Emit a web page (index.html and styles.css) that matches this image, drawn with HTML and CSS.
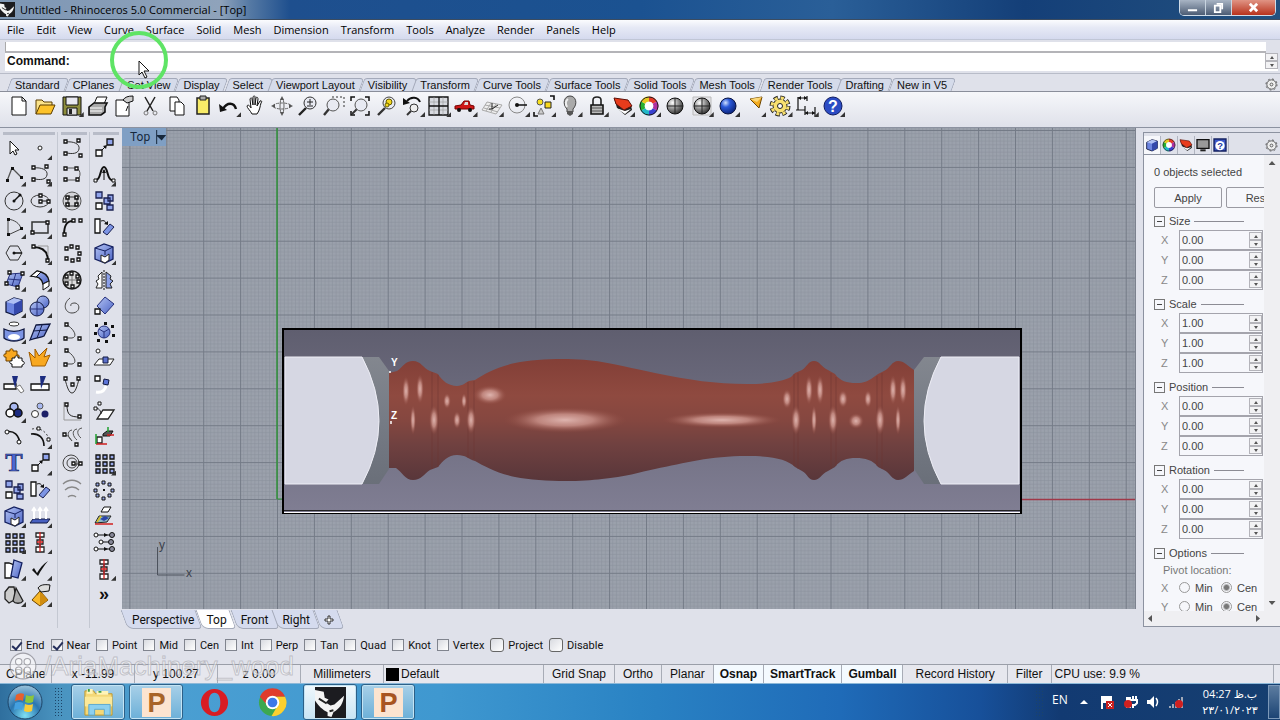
FILE: index.html
```html
<!DOCTYPE html>
<html lang="en">
<head>
    <meta charset="UTF-8">
    <meta name="viewport" content="width=device-width, initial-scale=1.0">
    <title>Untitled - Rhinoceros 5.0 Commercial - [Top]</title>
    <link rel="stylesheet" href="styles.css">
</head>
<body>

<!-- Icon set -->
<svg class="defs" aria-hidden="true">
    <defs>
        <linearGradient id="gBlue" x1="0" y1="0" x2="1" y2="1"><stop offset="0" stop-color="#b4c4f4"/><stop offset="1" stop-color="#4a62c4"/></linearGradient>
        <radialGradient id="gGrey" cx=".35" cy=".3" r=".8"><stop offset="0" stop-color="#fff"/><stop offset=".5" stop-color="#8a8a8a"/><stop offset="1" stop-color="#222"/></radialGradient>
        <radialGradient id="gBall" cx=".35" cy=".3" r=".8"><stop offset="0" stop-color="#cfe0ff"/><stop offset=".35" stop-color="#2a58d8"/><stop offset="1" stop-color="#061c6c"/></radialGradient>
        <radialGradient id="gOrb" cx=".5" cy=".9" r=".9"><stop offset="0" stop-color="#7fe0f4"/><stop offset=".5" stop-color="#2a76b0"/><stop offset="1" stop-color="#9cc4dc"/></radialGradient>
    </defs>

    <!-- standard toolbar -->
    <symbol id="new" viewBox="0 0 24 24"><path d="M5 3h10l4 4v14H5z" fill="#fff" stroke="#111"/><path d="M15 3v4h4" fill="none" stroke="#111"/></symbol>
    <symbol id="open" viewBox="0 0 24 24"><path d="M3 20V6h6l2 2h8v4" fill="#fbe38a" stroke="#5a3c00"/><path d="M3 20l4-9h15l-4 9z" fill="#fcc22a" stroke="#5a3c00"/></symbol>
    <symbol id="save" viewBox="0 0 24 24"><path d="M3 3h18v18H3z" fill="#8c8c3c" stroke="#111"/><path d="M6 3h12v8H6z" fill="#e8e8f0" stroke="#111"/><path d="M7 14h10v7H7z" fill="#ddd" stroke="#111"/><path d="M9 15h3v5H9z" fill="#222"/></symbol>
    <symbol id="print" viewBox="0 0 24 24"><path d="M8 10l3-7h10l-3 7z" fill="#fff" stroke="#111"/><path d="M3 13l5-4h13l-2 4v5l-4 3H3z" fill="#aaa" stroke="#111" stroke-width="1.600"/><path d="M4 14h12M4 17h12" stroke="#fff"/></symbol>
    <symbol id="props" viewBox="0 0 24 24"><path d="M4 6h13v16H4z" fill="#fff" stroke="#111"/><path d="M11 6c2-3 5-4 10-4v5l-6 2z" fill="#ccc" stroke="#111"/><path d="M16 12l-2 5" stroke="#111"/></symbol>
    <symbol id="cut" viewBox="0 0 24 24"><path d="M7 3l8 14M17 3L9 17" fill="none" stroke="#222" stroke-width="1.500"/><circle cx="8" cy="19" r="2" fill="none" stroke="#777"/><circle cx="17" cy="19" r="2" fill="none" stroke="#777"/></symbol>
    <symbol id="copy" viewBox="0 0 24 24"><path d="M5 3h7l2 3v11H5z" fill="#fff" stroke="#111"/><path d="M10 8h6l3 3v10h-9z" fill="#fff" stroke="#111"/></symbol>
    <symbol id="paste" viewBox="0 0 24 24"><path d="M6 4h12v16H6z" fill="#f8ec68" stroke="#222" stroke-width="1.500"/><path d="M9 2h6v4H9z" fill="#aaa" stroke="#222"/></symbol>
    <symbol id="undo" viewBox="0 0 24 24"><path d="M6 15C10 8 17 8 19 15" fill="none" stroke="#111" stroke-width="2.400"/><path d="M2 10l1 8 7-2z" fill="#111"/></symbol>
    <symbol id="pan" viewBox="0 0 24 24"><path d="M9 20C7 16 4 14 4 12c1-2 3 0 4 2L7 5c1-2 2-1 2 0l1 6V3c1-2 2-1 2 0v8l1-7c1-2 2 0 2 1l-1 7 3-5c2-1 2 1 1 2-1 3-1 7-4 11z" fill="#fff" stroke="#111"/></symbol>
    <symbol id="rotate" viewBox="0 0 24 24"><ellipse cx="12" cy="12" rx="9" ry="3" fill="none" stroke="#666" stroke-dasharray="3 1"/><ellipse cx="12" cy="12" rx="2" ry="8" fill="none" stroke="#666"/><path d="M12 2l-2 4h4zM12 22l-2-4h4zM1 12l4-2v4zM23 12l-4-2v4z" fill="#555"/></symbol>
    <symbol id="zoom" viewBox="0 0 24 24"><path d="M10 14l-7 7" stroke="#222" stroke-width="2.400"/><circle cx="14" cy="9" r="6" fill="#e8eaf2" stroke="#333"/><path d="M11 8h6M14 5v6M11 12h6" stroke="#222"/></symbol>
    <symbol id="zoomwin" viewBox="0 0 24 24"><path d="M10 3h12v12" fill="none" stroke="#333" stroke-dasharray="2 2"/><path d="M7 15l-5 6" stroke="#333" stroke-width="2.400"/><circle cx="11" cy="11" r="6" fill="#e8eaf2" stroke="#555"/></symbol>
    <symbol id="zoomext" viewBox="0 0 24 24"><path d="M3 7V3h4M17 3h4v4M21 17v4h-4M7 21H3v-4" fill="none" stroke="#111" stroke-width="1.500"/><path d="M9 15l-5 5" stroke="#333" stroke-width="2"/><circle cx="13" cy="11" r="6" fill="#e8eaf2" stroke="#555"/></symbol>
    <symbol id="zoomsel" viewBox="0 0 24 24"><path d="M10 14l-7 7" stroke="#333" stroke-width="2.400"/><circle cx="14" cy="9" r="6" fill="#e8eaf2" stroke="#444"/><circle cx="14" cy="8" r="3" fill="#f4d81c" stroke="#665c00"/><circle cx="12" cy="11" r="2" fill="#f4d81c" stroke="#665c00"/></symbol>
    <symbol id="undoview" viewBox="0 0 24 24"><path d="M6 7c4-5 11-4 13 1" fill="none" stroke="#111" stroke-width="2"/><path d="M2 4v7l7-2z" fill="#111"/><path d="M10 17l-4 4" stroke="#333" stroke-width="2"/><circle cx="13" cy="14" r="4" fill="#eee" stroke="#333"/></symbol>
    <symbol id="views" viewBox="0 0 24 24"><path d="M2 3h19v18H2z" fill="#d8dae0" stroke="#111" stroke-width="1.300"/><path d="M2 8h19M7 3v18M16 3v18M2 16h19" stroke="#999" stroke-width=".6"/><path d="M12 3v18M2 12h19" stroke="#111" stroke-width="1.300"/></symbol>
    <symbol id="car" viewBox="0 0 24 24"><path d="M2 12l6-1 3-4h5l1 4 4 1v3H2z" fill="#d01818" stroke="#700"/><path d="M11 11l1-3h3v3z" fill="#ddd"/><circle cx="6" cy="16" r="2" fill="#111"/><circle cx="17" cy="16" r="2" fill="#111"/></symbol>
    <symbol id="cplane" viewBox="0 0 24 24"><path d="M7 8l15 3-6 9-14-4zM5 11l15 3M4 14l14 4M11 9l-5 8M16 10l-5 8" fill="#eee" stroke="#aaa"/><path d="M12 15V9M12 15l6-4M12 15h-3" stroke="#222"/></symbol>
    <symbol id="radius" viewBox="0 0 24 24"><circle cx="11" cy="11" r="8" fill="none" stroke="#888"/><path d="M11 11h10" stroke="#111" stroke-width="1.500"/><circle cx="11" cy="11" r="2" fill="#111"/></symbol>
    <symbol id="selobj" viewBox="0 0 24 24"><path d="M18 2h4v4M2 18v4h4" fill="none" stroke="#111" stroke-width="1.600"/><circle cx="8" cy="8" r="3" fill="#f8e020" stroke="#555"/><path d="M13 8h6v6h-6z" fill="#f8d820" stroke="#222"/><path d="M9 14l3 6H6z" fill="#ccc" stroke="#777"/></symbol>
    <symbol id="bulb" viewBox="0 0 24 24"><path d="M9 15c-5-5-3-13 3-13s8 8 3 13v3H9z" fill="#aaa" stroke="#444"/><path d="M10 5c-3 2-2 6-1 8" stroke="#eee" stroke-width="2" fill="none"/><path d="M9 17h6v3l-3 2-3-2z" fill="#555"/></symbol>
    <symbol id="lock" viewBox="0 0 24 24"><path d="M8 11V6c0-4 8-4 8 0v5" fill="none" stroke="#222" stroke-width="1.600"/><path d="M6 11h12v9H6z" fill="#bbb" stroke="#111" stroke-width="1.600"/><path d="M7 14h10M7 17h10" stroke="#555"/></symbol>
    <symbol id="layers" viewBox="0 0 24 24"><path d="M3 4l3 10 8 7 7-5-1-5-7 5-6-5z" fill="#222"/><path d="M5 14l9 6 6-5-6 2z" fill="#fff"/><path d="M3 4l14 2 4 6-8 4-8-6z" fill="#e83c1c" stroke="#5c1008"/></symbol>
    <symbol id="wheel" viewBox="0 0 24 24"><g fill="none" stroke-width="5"><path d="M12 5a7 7 0 0 1 6 3.500" stroke="#e83a28"/><path d="M18 8.500a7 7 0 0 1 0 7" stroke="#b030a0"/><path d="M18 15.500a7 7 0 0 1-6 3.500" stroke="#3840d0"/><path d="M12 19a7 7 0 0 1-6-3.500" stroke="#20b8c8"/><path d="M6 15.500a7 7 0 0 1 0-7" stroke="#28b030"/><path d="M6 8.500A7 7 0 0 1 12 5" stroke="#e8c820"/></g><circle cx="12" cy="12" r="9" fill="none" stroke="#222"/><circle cx="12" cy="12" r="4" fill="#fff"/></symbol>
    <symbol id="sphere" viewBox="0 0 24 24"><circle cx="12" cy="12" r="8" fill="url(#gGrey)" stroke="#111"/><path d="M4 12h16M12 4v16" stroke="#222"/></symbol>
    <symbol id="sphere2" viewBox="0 0 24 24"><path d="M3 3h18v18H3z" fill="#e4e4e8" stroke="#bbb"/><circle cx="12" cy="12" r="8" fill="url(#gGrey)" stroke="#111"/><path d="M4 12h16M12 4v16" stroke="#222"/></symbol>
    <symbol id="ball" viewBox="0 0 24 24"><circle cx="12" cy="12" r="8" fill="url(#gBall)" stroke="#0a1440"/></symbol>
    <symbol id="cone" viewBox="0 0 24 24"><path d="M8 5l12-2-3 11z" fill="#f4ac20" stroke="#6c4400"/><path d="M8 5l12-2-5 5z" fill="#fcd878"/></symbol>
    <symbol id="gear" viewBox="0 0 24 24"><circle cx="12" cy="12" r="8" fill="none" stroke="#222" stroke-width="5" stroke-dasharray="4 2.300"/><circle cx="12" cy="12" r="7" fill="#f8e070" stroke="#222"/><circle cx="12" cy="12" r="8" fill="none" stroke="#f8e070" stroke-width="3" stroke-dasharray="3 3.300" stroke-dashoffset="-.5"/><circle cx="12" cy="12" r="2.500" fill="#fff" stroke="#222"/></symbol>
    <symbol id="dims" viewBox="0 0 24 24"><path d="M3 3v13M3 4h9M12 2v5M1 16h9v-4M10 15v6M20 13v9M10 19h10" fill="none" stroke="#111" stroke-width="1.200"/><path d="M3 4l3-2v4zM12 4L9 2v4zM10 19l3-2v4zM20 19l-3-2v4z" fill="#111"/></symbol>
    <symbol id="cog" viewBox="0 0 14 14"><circle cx="7" cy="7" r="5" fill="#eee" stroke="#555"/><circle cx="7" cy="7" r="6" fill="none" stroke="#555" stroke-dasharray="2 2.700"/><circle cx="7" cy="7" r="1.500" fill="none" stroke="#555"/></symbol>

    <!-- drawing tools -->
    <symbol id="pointer" viewBox="0 0 24 24"><path d="M8 5v13l3-3 2 4 2-1-2-4h4z" fill="#fff" stroke="#111"/></symbol>
    <symbol id="point" viewBox="0 0 24 24"><circle cx="12" cy="12" r="2" fill="#fff" stroke="#222"/></symbol>
    <symbol id="curve" viewBox="0 0 24 24"><path d="M5 6c9-1 15 2 14 7s-7 5-12 4" fill="none" stroke="#333"/><path d="M4 4h3v3H4zM17 3h3v3h-3zM4 16h3v3H4zM19 18h3v3h-3z" fill="#fff" stroke="#111" stroke-width="1.300"/></symbol>
    <symbol id="curve2" viewBox="0 0 24 24"><path d="M6 6h11c4 3 4 9 0 12H6" fill="none" stroke="#555"/><path d="M4 5h3v3H4zM15 5h3v3h-3zM4 16h3v3H4zM16 16h3v3h-3z" fill="#fff" stroke="#111" stroke-width="1.300"/></symbol>
    <symbol id="scale" viewBox="0 0 24 24"><path d="M15 3h6v6h-6z" fill="#90a4ec" stroke="#111" stroke-width="1.300"/><path d="M4 14h6v6H4z" fill="#fff" stroke="#111" stroke-width="1.300"/><path d="M10 14l4-4" stroke="#111"/><path d="M15 9l-1 4-3-3z" fill="#111"/></symbol>
    <symbol id="polyline" viewBox="0 0 24 24"><path d="M5 19l5-13 9 9" fill="none" stroke="#555" stroke-width="1.300"/><path d="M4 17h3v3H4zM9 5h3v3H9zM18 14h3v3h-3z" fill="#111"/></symbol>
    <symbol id="bell" viewBox="0 0 24 24"><path d="M4 18c5 0 4-13 8-13s3 13 8 13" fill="none" stroke="#111" stroke-width="2"/><path d="M12 18V8" stroke="#111"/><path d="M12 7l-2 4h4z" fill="#111"/><path d="M2 17h3v3H2zM20 17h3v3h-3z" fill="#fff" stroke="#111"/></symbol>
    <symbol id="circle" viewBox="0 0 24 24"><circle cx="12" cy="12" r="9" fill="none" stroke="#333"/><path d="M12 12l6-6" stroke="#111" stroke-width="1.500"/><circle cx="12" cy="12" r="1.500" fill="#111"/><circle cx="18" cy="6" r="1.500" fill="#111"/></symbol>
    <symbol id="ellipse" viewBox="0 0 24 24"><ellipse cx="12" cy="12" rx="9" ry="6" fill="none" stroke="#333"/><path d="M12 12h9" stroke="#111"/><path d="M11 5h3v3h-3zM11 11h3v3h-3zM19 11h3v3h-3z" fill="#fff" stroke="#111" stroke-width="1.300"/></symbol>
    <symbol id="ringed" viewBox="0 0 24 24"><circle cx="12" cy="12" r="9" fill="#d4d4d8" stroke="#555"/><path d="M8 8h9v9H8z" fill="none" stroke="#333"/><path d="M6 7h3v3H6zM15 7h3v3h-3zM6 14h3v3H6zM15 14h3v3h-3z" fill="#fff" stroke="#111" stroke-width="1.500"/></symbol>
    <symbol id="arr" viewBox="0 0 24 24"><path d="M4 14h6v6H4z" fill="#fff" stroke="#111" stroke-width="1.300"/><path d="M4 3h6v6H4zM16 6h5v6h-5zM12 9h6v6h-6zM15 16h6v5h-6z" fill="#90a4ec" stroke="#1a2050" stroke-width="1.300"/></symbol>
    <symbol id="arc" viewBox="0 0 24 24"><path d="M6 4v16l13-6C18 8 12 5 6 4z" fill="none" stroke="#444"/><path d="M5 3h3v3H5zM5 18h3v3H5zM18 12h3v3h-3z" fill="#111"/></symbol>
    <symbol id="rect" viewBox="0 0 24 24"><path d="M4 7h16v11H4z" fill="none" stroke="#333" stroke-width="1.500"/><path d="M3 16h3v3H3zM18 6h3v3h-3z" fill="#fff" stroke="#111" stroke-width="1.300"/></symbol>
    <symbol id="arc2" viewBox="0 0 24 24"><path d="M4 20C4 11 6 6 13 6" fill="none" stroke="#111" stroke-width="2"/><path d="M3 4h3v3H3zM12 4h3v3h-3zM19 4h3v3h-3zM3 18h3v3H3z" fill="#fff" stroke="#111" stroke-width="1.300"/></symbol>
    <symbol id="rot" viewBox="0 0 24 24"><path d="M3 4h5v14H3z" fill="#fff" stroke="#111" stroke-width="1.300"/><path d="M11 17l7-8 4 3-7 8z" fill="#7c94e4" stroke="#1a2050"/><path d="M9 6c3-1 4 0 5 2" fill="none" stroke="#111"/><path d="M12 9l4 1V6z" fill="#111"/></symbol>
    <symbol id="hex" viewBox="0 0 24 24"><path d="M8 5h8l4 7-4 7H8l-4-7z" fill="none" stroke="#333"/><path d="M12 12h8" stroke="#111" stroke-width="1.500"/><circle cx="12" cy="12" r="1.500" fill="#111"/></symbol>
    <symbol id="fillet" viewBox="0 0 24 24"><path d="M5 6c9 0 15 4 15 14" fill="none" stroke="#111" stroke-width="2"/><path d="M10 5h10v9" fill="none" stroke="#999"/><path d="M4 4h3v3H4zM18 18h3v3h-3z" fill="#fff" stroke="#111" stroke-width="1.300"/></symbol>
    <symbol id="cring" viewBox="0 0 24 24"><path d="M5 6h3v3H5zM10 4h3v3h-3zM16 5h3v3h-3zM18 11h3v3h-3zM17 17h3v3h-3zM11 18h3v3h-3zM5 16h3v3H5z" fill="#fff" stroke="#111" stroke-width="1.300"/></symbol>
    <symbol id="cage" viewBox="0 0 24 24"><path d="M3 7l9-4 9 3v12l-8 4-10-4z" fill="url(#gBlue)" stroke="#142060" stroke-width="1.300"/><path d="M3 7l10 3 8-4M13 10v4" fill="none" stroke="#142060"/><path d="M9 14l4 2 4-3v6l-4 3-4-2z" fill="#fff" stroke="#222"/></symbol>
    <symbol id="srf4" viewBox="0 0 24 24"><path d="M8 6l13-1-5 14-12-3z" fill="url(#gBlue)" stroke="#26307c"/><path d="M14 5l-4 13M6 11l12 1" stroke="#26307c"/><path d="M6 3h3v3H6zM19 4h3v3h-3zM3 14h3v3H3zM14 18h3v3h-3z" fill="#fff" stroke="#111" stroke-width="1.300"/></symbol>
    <symbol id="sweep" viewBox="0 0 24 24"><path d="M3 8l6-5c7 1 11 4 12 10l-6 3c-1-5-5-8-12-8z" fill="url(#gBlue)" stroke="#111" stroke-width="1.300"/><path d="M15 16l6-3v5l-6 4zM3 8l6-5 4 1-5 5z" fill="#fff" stroke="#111"/></symbol>
    <symbol id="globe" viewBox="0 0 24 24"><circle cx="12" cy="12" r="9" fill="#ddd" stroke="#222" stroke-width="1.500"/><path d="M3 12h18M12 3v18" stroke="#777"/><path d="M5 7h3v3H5zM10 4h3v3h-3zM16 7h3v3h-3zM17 12h3v3h-3zM11 17h3v3h-3zM5 14h3v3H5z" fill="#fff" stroke="#111" stroke-width="1.300"/></symbol>
    <symbol id="mirror" viewBox="0 0 24 24"><path d="M12 2v20" stroke="#111" stroke-dasharray="2 1"/><path d="M10 4v16H4l2-4-2-3 3-2-1-3z" fill="#fff" stroke="#222"/><path d="M14 4v16h6l-2-4 3-3-3-2 1-3z" fill="#8ca0e8" stroke="#222"/></symbol>
    <symbol id="box" viewBox="0 0 24 24"><path d="M4 8l8-4 8 2v11l-8 4-8-3z" fill="#6c84e0" stroke="#101840" stroke-width="1.300"/><path d="M4 8l8-4 8 2-8 4z" fill="#b0c0f4"/><path d="M12 10l8-4v11l-8 4z" fill="#3448ac"/></symbol>
    <symbol id="balls" viewBox="0 0 24 24"><circle cx="15" cy="8" r="6" fill="url(#gBlue)" stroke="#101840"/><circle cx="9" cy="15" r="7" fill="url(#gBlue)" stroke="#101840"/><path d="M2 15h14M9 8v14" stroke="#26307c"/></symbol>
    <symbol id="spiral" viewBox="0 0 24 24"><path d="M10 4c-8 6-5 15 2 15 8 0 9-9 3-10-3 0-5 1-4 3" fill="none" stroke="#444"/></symbol>
    <symbol id="diamond" viewBox="0 0 24 24"><path d="M13 3l9 7-9 10-8-8z" fill="url(#gBlue)" stroke="#26307c"/><path d="M3 15h5v5H3z" fill="#fff" stroke="#111" stroke-width="1.300"/></symbol>
    <symbol id="extrude" viewBox="0 0 24 24"><ellipse cx="12" cy="4" rx="5" ry="2" fill="#fff" stroke="#333"/><path d="M2 9c6 3 14 3 20 0v9c-5 4-15 4-20 0z" fill="#7c94e4" stroke="#101840" stroke-width="1.300"/><ellipse cx="12" cy="17" rx="6" ry="3" fill="#fff"/></symbol>
    <symbol id="patch" viewBox="0 0 24 24"><path d="M8 5l14-1-6 12c-4 2-6 1-14 4z" fill="url(#gBlue)" stroke="#101840" stroke-width="1.300"/><path d="M5 11l14-1M14 5L9 18" stroke="#101840"/></symbol>
    <symbol id="hook" viewBox="0 0 24 24"><path d="M7 5c7 4 11 12 5 13H6" fill="none" stroke="#444"/><path d="M5 3h3v3H5zM4 17h3v3H4zM18 17h3v3h-3z" fill="#fff" stroke="#111" stroke-width="1.300"/></symbol>
    <symbol id="burst" viewBox="0 0 24 24"><circle cx="12" cy="12" r="6" fill="url(#gBlue)" stroke="#26307c"/><path d="M7 9l5 3 5-3M12 12v6" stroke="#26307c" fill="none"/><path d="M3 4h3v3H3zM12 2h3v3h-3zM19 5h3v3h-3zM2 12h3v3H2zM20 14h3v3h-3zM5 19h3v3H5zM13 20h3v3h-3z" fill="#111"/></symbol>
    <symbol id="puzzle" viewBox="0 0 24 24"><path d="M4 5h4c-1-3 4-3 3 0h4v4c3-1 3 4 0 3v3H4v-4c-3 1-3-4 0-3z" fill="#f8a820" stroke="#6c4000"/><path d="M10 12h3c-1-3 4-3 3 0h4v3c3 0 3 4 0 4v2H10v-3c-3 0-3-4 0-3z" fill="#fff" stroke="#111"/></symbol>
    <symbol id="explode" viewBox="0 0 24 24"><path d="M4 20L1 6l6 6V3l4 7 8-8-3 9 6-2-5 11z" fill="#f8a820" stroke="#a05c00"/></symbol>
    <symbol id="project" viewBox="0 0 24 24"><circle cx="6" cy="5" r="2" fill="#fff" stroke="#222"/><path d="M2 19l5-6h15l-4 6z" fill="#fff" stroke="#222"/><path d="M11 11h5v6h-5z" fill="#5c70cc" stroke="#101840"/></symbol>
    <symbol id="trim" viewBox="0 0 24 24"><path d="M2 11h12v5H2z" fill="#fff" stroke="#111" stroke-width="1.300"/><path d="M10 3h6l-3 12z" fill="#1c2c80"/><path d="M14 14l4-2 4 6-3 2z" fill="#fff" stroke="#777"/></symbol>
    <symbol id="split" viewBox="0 0 24 24"><path d="M3 11h18v6H3z" fill="#fff" stroke="#111" stroke-width="1.300"/><path d="M12 3h6l-5 13z" fill="#1c2c80"/></symbol>
    <symbol id="parabola" viewBox="0 0 24 24"><path d="M5 6c2 8 4 14 7 14s5-6 7-14" fill="none" stroke="#333"/><path d="M4 4h3v3H4zM17 4h3v3h-3zM11 10h3v3h-3z" fill="#fff" stroke="#111" stroke-width="1.300"/></symbol>
    <symbol id="bend" viewBox="0 0 24 24"><path d="M3 3h5v5H3z" fill="#fff" stroke="#111" stroke-width="1.300"/><path d="M12 6l5 1-1 5-5-1z" fill="#5c74d8" stroke="#101840"/><path d="M4 19c6 1 9-2 10-6" fill="none" stroke="#fff" stroke-width="3"/></symbol>
    <symbol id="union" viewBox="0 0 24 24"><circle cx="12" cy="8" r="4" fill="#a8b8f0" stroke="#111" stroke-width="1.500"/><circle cx="16" cy="14" r="4" fill="#1c2c80" stroke="#111" stroke-width="1.500"/><circle cx="8" cy="14" r="4" fill="#fff" stroke="#111" stroke-width="1.500"/></symbol>
    <symbol id="dots3" viewBox="0 0 24 24"><circle cx="12" cy="7" r="3" fill="#a8b8f0" stroke="#555"/><circle cx="7" cy="15" r="3.500" fill="#fff" stroke="#333"/><circle cx="17" cy="15" r="3.500" fill="#1c2068"/></symbol>
    <symbol id="hyper" viewBox="0 0 24 24"><path d="M4 3v18h17" fill="none" stroke="#999"/><path d="M7 6c0 10 3 12 13 12" fill="none" stroke="#222"/><path d="M5 4h3v3H5zM18 16h3v3h-3z" fill="#fff" stroke="#111" stroke-width="1.300"/></symbol>
    <symbol id="plane" viewBox="0 0 24 24"><path d="M5 20l6-9h11l-6 9z" fill="#fff" stroke="#222" stroke-width="1.300"/><path d="M3 9c4 0 6 3 6 6" fill="none" stroke="#222"/><path d="M6 3h3v3H6zM2 8h3v3H2z" fill="#fff" stroke="#111"/></symbol>
    <symbol id="arc3" viewBox="0 0 24 24"><path d="M4 7c8-2 13 3 14 12" fill="none" stroke="#111" stroke-width="1.600"/><circle cx="5" cy="7" r="2" fill="#fff" stroke="#111"/><circle cx="17" cy="17" r="2" fill="#fff" stroke="#111"/></symbol>
    <symbol id="offset" viewBox="0 0 24 24"><path d="M3 9c8-1 13 4 13 12" fill="none" stroke="#111" stroke-width="1.600"/><path d="M4 4c10-2 17 5 17 13" fill="none" stroke="#444" stroke-dasharray="2 2"/><path d="M9 2h3v3H9zM19 13h3v3h-3z" fill="#fff" stroke="#111"/></symbol>
    <symbol id="helix" viewBox="0 0 24 24"><path d="M4 10c3 0 5 1 8 6M12 5c-6 1-4 8 0 11M17 4c-6 1-4 8 0 11M22 3c-6 1-5 7-1 10" fill="none" stroke="#555"/><path d="M3 8h3v3H3zM15 18h3v3h-3z" fill="#fff" stroke="#111" stroke-width="1.300"/></symbol>
    <symbol id="orient" viewBox="0 0 24 24"><path d="M5 12h5v6H5z" fill="#fff" stroke="#222" stroke-width="1.300"/><path d="M11 9l4-3h6l-3 5h-7z" fill="#555" stroke="#111"/><path d="M4 19h11M15 10h7" stroke="#d02020" stroke-width="1.500"/><path d="M4 19V9M16 7V2" stroke="#20a030" stroke-width="1.500"/></symbol>
    <symbol id="spiral2" viewBox="0 0 24 24"><circle cx="11" cy="12" r="8" fill="none" stroke="#444"/><circle cx="12" cy="12" r="5" fill="none" stroke="#444"/><path d="M12 13h9" stroke="#444"/><path d="M12 11h3v3h-3zM19 11h3v3h-3z" fill="#fff" stroke="#111" stroke-width="1.300"/></symbol>
    <symbol id="grid9" viewBox="0 0 24 24"><path d="M4 4h4v4H4zM11 4h4v4h-4zM18 4h4v4h-4zM4 11h4v4H4zM11 11h4v4h-4zM18 11h4v4h-4zM4 18h4v4H4zM11 18h4v4h-4zM18 18h4v4h-4z" fill="#98a8e8" stroke="#111" stroke-width="1.300"/></symbol>
    <symbol id="arcs" viewBox="0 0 24 24"><path d="M3 6c5-5 13-5 18 0M5 12c4-4 10-4 14 0M8 19c2-2 6-2 8 0" fill="none" stroke="#888" stroke-width="1.300"/></symbol>
    <symbol id="polar" viewBox="0 0 24 24"><path d="M10 3h3v3h-3zM16 5h3v3h-3zM19 11h3v3h-3zM16 16h3v3h-3zM10 19h3v3h-3zM4 16h3v3H4zM2 11h3v3H2zM4 5h3v3H4z" fill="#98a8e8" stroke="#111"/><path d="M11 12h2" stroke="#111" stroke-width="2"/></symbol>
    <symbol id="extarrows" viewBox="0 0 24 24"><path d="M2 19l3-4h17l-3 4z" fill="#4860c0" stroke="#101840"/><path d="M6 15V4M12 15V4M18 15V4M4 7l2-3 2 3M10 7l2-3 2 3M16 7l2-3 2 3" fill="none" stroke="#fff" stroke-width="2"/></symbol>
    <symbol id="sheets" viewBox="0 0 24 24"><path d="M9 8l3-5h7l-3 5z" fill="#fff" stroke="#111"/><path d="M3 19l4-7h12l-4 6z" fill="#8cb8c8" stroke="#222"/><path d="M8 15l5-3 4 2-5 3z" fill="#2c44a8"/><path d="M3 20h18" stroke="#d02020" stroke-width="1.500"/><path d="M5 18l4-6" stroke="#d8c020" stroke-width="1.500"/></symbol>
    <symbol id="align" viewBox="0 0 24 24"><path d="M8 3h8v4H8zM9 10h6v4H9zM8 17h8v5H8zM12 7v3M12 14v3" fill="#fff" stroke="#222" stroke-width="1.300"/><path d="M12 2v20M9 12h6" stroke="#d02020" stroke-width="1.300"/></symbol>
    <symbol id="nodes" viewBox="0 0 24 24"><path d="M5 5h14M9 12h9M5 19h14" stroke="#111"/><circle cx="4" cy="5" r="2" fill="#fff" stroke="#111"/><circle cx="9" cy="12" r="2" fill="#fff" stroke="#111"/><circle cx="4" cy="19" r="2" fill="#fff" stroke="#111"/><circle cx="20" cy="5" r="2.500" fill="#889" stroke="#111"/><circle cx="19" cy="12" r="2.500" fill="#889" stroke="#111"/><circle cx="20" cy="19" r="2.500" fill="#889" stroke="#111"/><path d="M12 3l4 2-4 2zM12 17l4 2-4 2z" fill="#111"/></symbol>
    <symbol id="flip" viewBox="0 0 24 24"><path d="M3 6h4l5 2-3 13H3z" fill="#fff" stroke="#111" stroke-width="1.300"/><path d="M12 3l8 3-4 15-7-2z" fill="url(#gBlue)" stroke="#142060" stroke-width="1.300"/></symbol>
    <symbol id="check" viewBox="0 0 24 24"><path d="M4 13l2-2 3 5C12 11 15 7 20 4c-4 5-7 9-10 15z" fill="#111"/></symbol>
    <symbol id="solids" viewBox="0 0 24 24"><path d="M3 9l4-5h5l2 12-7 4-4-4z" fill="#ccc" stroke="#222" stroke-width="1.300"/><path d="M14 5l7 13c-2 3-8 3-10 0z" fill="#aaa" stroke="#222" stroke-width="1.300"/></symbol>
    <symbol id="handpyr" viewBox="0 0 24 24"><path d="M12 8l8 9-8 6-8-6z" fill="#f8b828" stroke="#6c4400"/><path d="M12 8v15l8-6z" fill="#d08c10"/><path d="M10 5c2-3 6-4 12-3l-1 6-8 1z" fill="#ddd" stroke="#111"/></symbol>
    <symbol id="monitor" viewBox="0 0 24 24"><path d="M3 4h18v13H3z" fill="#999" stroke="#111" stroke-width="2"/><path d="M8 20h8" stroke="#222" stroke-width="3"/></symbol>
    <symbol id="rhino" viewBox="0 0 32 32"><path d="M0 0h32v32H0z" fill="#1c1c20"/><path d="M0 3l9 2 1 6 4 2-3 3 5 3 4-1 10-9c-1 8-4 13-11 17l-2 5-4-1v-4C8 24 3 19 0 14z" fill="#f4f4f4"/><path d="M4 12l8 5M15 25l4-1" stroke="#222" stroke-width="2"/></symbol>
</svg>

<header class="titlebar">
    <svg class="app-icon" aria-hidden="true"><use href="#rhino"/></svg>
    <span class="title">Untitled - Rhinoceros 5.0 Commercial - [Top]</span>
    <div class="win-buttons">
        <button aria-label="Minimize"><svg viewBox="0 0 12 12"><path d="M1 8h10v2H1z" fill="#fff"/></svg></button>
        <button aria-label="Restore"><svg viewBox="0 0 12 12"><path d="M4 1h7v7H9V3H4z" fill="#fff"/><path d="M2 4h6v7H2z" fill="none" stroke="#fff" stroke-width="2"/></svg></button>
        <button class="close" aria-label="Close"><svg viewBox="0 0 12 12"><path d="M2 2l8 8M10 2l-8 8" stroke="#fff" stroke-width="3"/></svg></button>
    </div>
</header>

<nav class="menubar">
    <a href="#">File</a><a href="#">Edit</a><a href="#">View</a><a href="#">Curve</a><a href="#">Surface</a><a href="#">Solid</a><a href="#">Mesh</a><a href="#">Dimension</a><a href="#">Transform</a><a href="#">Tools</a><a href="#">Analyze</a><a href="#">Render</a><a href="#">Panels</a><a href="#">Help</a>
</nav>

<section class="command">
    <div class="history"></div>
    <div class="prompt">
        <label for="cmd">Command:</label>
        <input id="cmd" type="text">
        <div class="spin"><button aria-label="Up"></button><button aria-label="Down"></button></div>
    </div>
</section>

<section class="toolbar">
    <div class="tool-tabs">
        <button class="active">Standard</button><button>CPlanes</button><button>Set View</button><button>Display</button><button>Select</button><button>Viewport Layout</button><button>Visibility</button><button>Transform</button><button>Curve Tools</button><button>Surface Tools</button><button>Solid Tools</button><button>Mesh Tools</button><button>Render Tools</button><button>Drafting</button><button>New in V5</button>
        <button class="cog" aria-label="Toolbar options"><svg><use href="#cog"/></svg></button>
    </div>
    <div class="tools">
        <button class="tool" aria-label="New"><svg><use href="#new"/></svg></button>
        <button class="tool" aria-label="Open"><svg><use href="#open"/></svg></button>
        <button class="tool fly" aria-label="Save"><svg><use href="#save"/></svg></button>
        <button class="tool" aria-label="Print"><svg><use href="#print"/></svg></button>
        <button class="tool" aria-label="Document properties"><svg><use href="#props"/></svg></button>
        <button class="tool" aria-label="Cut"><svg><use href="#cut"/></svg></button>
        <button class="tool" aria-label="Copy"><svg><use href="#copy"/></svg></button>
        <button class="tool" aria-label="Paste"><svg><use href="#paste"/></svg></button>
        <button class="tool fly" aria-label="Undo"><svg><use href="#undo"/></svg></button>
        <button class="tool" aria-label="Pan"><svg><use href="#pan"/></svg></button>
        <button class="tool" aria-label="Rotate view"><svg><use href="#rotate"/></svg></button>
        <button class="tool" aria-label="Zoom dynamic"><svg><use href="#zoom"/></svg></button>
        <button class="tool" aria-label="Zoom window"><svg><use href="#zoomwin"/></svg></button>
        <button class="tool" aria-label="Zoom extents"><svg><use href="#zoomext"/></svg></button>
        <button class="tool" aria-label="Zoom selected"><svg><use href="#zoomsel"/></svg></button>
        <button class="tool fly" aria-label="Undo view change"><svg><use href="#undoview"/></svg></button>
        <button class="tool fly" aria-label="Viewport layout"><svg><use href="#views"/></svg></button>
        <button class="tool fly" aria-label="Named view"><svg><use href="#car"/></svg></button>
        <button class="tool fly" aria-label="Set CPlane"><svg><use href="#cplane"/></svg></button>
        <button class="tool fly" aria-label="Object snap"><svg><use href="#radius"/></svg></button>
        <button class="tool fly" aria-label="Select"><svg><use href="#selobj"/></svg></button>
        <button class="tool fly" aria-label="Hide"><svg><use href="#bulb"/></svg></button>
        <button class="tool fly" aria-label="Lock"><svg><use href="#lock"/></svg></button>
        <button class="tool fly" aria-label="Layers"><svg><use href="#layers"/></svg></button>
        <button class="tool fly" aria-label="Object color"><svg><use href="#wheel"/></svg></button>
        <button class="tool" aria-label="Shade"><svg><use href="#sphere"/></svg></button>
        <button class="tool fly" aria-label="Shaded viewport"><svg><use href="#sphere2"/></svg></button>
        <button class="tool fly" aria-label="Render"><svg><use href="#ball"/></svg></button>
        <button class="tool fly" aria-label="Spotlight"><svg><use href="#cone"/></svg></button>
        <button class="tool fly" aria-label="Options"><svg><use href="#gear"/></svg></button>
        <button class="tool fly" aria-label="Dimension"><svg><use href="#dims"/></svg></button>
        <button class="tool fly" aria-label="Help"><svg viewBox="0 0 24 24"><circle cx="12" cy="12" r="9" fill="#2c4cc4" stroke="#101c60"/><text x="12" y="18" text-anchor="middle" font-size="16" font-weight="bold" fill="#fff">?</text></svg></button>
    </div>
</section>

<main class="main">
    <aside class="palettes">
        <div class="palette two">
            <button class="tool" aria-label="Cancel"><svg><use href="#pointer"/></svg></button>
            <button class="tool fly" aria-label="Point"><svg><use href="#point"/></svg></button>
            <button class="tool fly" aria-label="Polyline"><svg><use href="#polyline"/></svg></button>
            <button class="tool fly" aria-label="Curve"><svg><use href="#curve"/></svg></button>
            <button class="tool fly" aria-label="Circle"><svg><use href="#circle"/></svg></button>
            <button class="tool fly" aria-label="Ellipse"><svg><use href="#ellipse"/></svg></button>
            <button class="tool fly" aria-label="Arc"><svg><use href="#arc"/></svg></button>
            <button class="tool fly" aria-label="Rectangle"><svg><use href="#rect"/></svg></button>
            <button class="tool fly" aria-label="Polygon"><svg><use href="#hex"/></svg></button>
            <button class="tool fly" aria-label="Fillet curves"><svg><use href="#fillet"/></svg></button>
            <button class="tool fly" aria-label="Surface from points"><svg><use href="#srf4"/></svg></button>
            <button class="tool fly" aria-label="Sweep"><svg><use href="#sweep"/></svg></button>
            <button class="tool fly" aria-label="Box"><svg><use href="#box"/></svg></button>
            <button class="tool fly" aria-label="Boolean"><svg><use href="#balls"/></svg></button>
            <button class="tool fly" aria-label="Project curve"><svg><use href="#extrude"/></svg></button>
            <button class="tool fly" aria-label="Mesh"><svg><use href="#patch"/></svg></button>
            <button class="tool" aria-label="Join"><svg><use href="#puzzle"/></svg></button>
            <button class="tool" aria-label="Explode"><svg><use href="#explode"/></svg></button>
            <button class="tool" aria-label="Trim"><svg><use href="#trim"/></svg></button>
            <button class="tool" aria-label="Split"><svg><use href="#split"/></svg></button>
            <button class="tool fly" aria-label="Group"><svg><use href="#union"/></svg></button>
            <button class="tool" aria-label="Ungroup"><svg><use href="#dots3"/></svg></button>
            <button class="tool" aria-label="Edit points"><svg><use href="#arc3"/></svg></button>
            <button class="tool fly" aria-label="Control points"><svg><use href="#offset"/></svg></button>
            <button class="tool" aria-label="Text"><svg viewBox="0 0 24 24"><text x="12" y="20" text-anchor="middle" font-family="Liberation Serif, serif" font-size="26" font-weight="bold" fill="#4c68d0" stroke="#142060" stroke-width=".7">T</text></svg></button>
            <button class="tool fly" aria-label="Move"><svg><use href="#scale"/></svg></button>
            <button class="tool" aria-label="Copy objects"><svg><use href="#arr"/></svg></button>
            <button class="tool" aria-label="Rotate"><svg><use href="#rot"/></svg></button>
            <button class="tool fly" aria-label="Scale"><svg><use href="#cage"/></svg></button>
            <button class="tool fly" aria-label="Extrude"><svg><use href="#extarrows"/></svg></button>
            <button class="tool fly" aria-label="Array"><svg><use href="#grid9"/></svg></button>
            <button class="tool fly" aria-label="Align"><svg><use href="#align"/></svg></button>
            <button class="tool fly" aria-label="Flip"><svg><use href="#flip"/></svg></button>
            <button class="tool fly" aria-label="Check"><svg><use href="#check"/></svg></button>
            <button class="tool fly" aria-label="Blocks"><svg><use href="#solids"/></svg></button>
            <button class="tool fly" aria-label="History"><svg><use href="#handpyr"/></svg></button>
        </div>
        <div class="palette">
            <button class="tool" aria-label="Control point curve"><svg><use href="#curve"/></svg></button>
            <button class="tool" aria-label="Interpolate points"><svg><use href="#curve2"/></svg></button>
            <button class="tool" aria-label="Curve on surface"><svg><use href="#ringed"/></svg></button>
            <button class="tool" aria-label="Handle curve"><svg><use href="#arc2"/></svg></button>
            <button class="tool" aria-label="Curve through points"><svg><use href="#cring"/></svg></button>
            <button class="tool" aria-label="Sketch on surface"><svg><use href="#globe"/></svg></button>
            <button class="tool" aria-label="Sketch"><svg><use href="#spiral"/></svg></button>
            <button class="tool" aria-label="Conic"><svg><use href="#hook"/></svg></button>
            <button class="tool" aria-label="Conic tangent"><svg><use href="#hook"/></svg></button>
            <button class="tool" aria-label="Parabola"><svg><use href="#parabola"/></svg></button>
            <button class="tool" aria-label="Hyperbola"><svg><use href="#hyper"/></svg></button>
            <button class="tool" aria-label="Helix"><svg><use href="#helix"/></svg></button>
            <button class="tool" aria-label="Spiral"><svg><use href="#spiral2"/></svg></button>
            <button class="tool" aria-label="Tween curves"><svg><use href="#arcs"/></svg></button>
        </div>
        <div class="palette">
            <button class="tool" aria-label="Move"><svg><use href="#scale"/></svg></button>
            <button class="tool fly" aria-label="Soft move"><svg><use href="#bell"/></svg></button>
            <button class="tool" aria-label="Copy"><svg><use href="#arr"/></svg></button>
            <button class="tool" aria-label="Rotate 2-D"><svg><use href="#rot"/></svg></button>
            <button class="tool fly" aria-label="Scale 3-D"><svg><use href="#cage"/></svg></button>
            <button class="tool" aria-label="Mirror"><svg><use href="#mirror"/></svg></button>
            <button class="tool" aria-label="Shear"><svg><use href="#diamond"/></svg></button>
            <button class="tool" aria-label="Cage edit"><svg><use href="#burst"/></svg></button>
            <button class="tool" aria-label="Project to CPlane"><svg><use href="#project"/></svg></button>
            <button class="tool" aria-label="Bend"><svg><use href="#bend"/></svg></button>
            <button class="tool" aria-label="Orient on surface"><svg><use href="#plane"/></svg></button>
            <button class="tool" aria-label="Orient"><svg><use href="#orient"/></svg></button>
            <button class="tool fly" aria-label="Rectangular array"><svg><use href="#grid9"/></svg></button>
            <button class="tool" aria-label="Polar array"><svg><use href="#polar"/></svg></button>
            <button class="tool" aria-label="Remap to CPlane"><svg><use href="#sheets"/></svg></button>
            <button class="tool" aria-label="Set points"><svg><use href="#nodes"/></svg></button>
            <button class="tool fly" aria-label="Align objects"><svg><use href="#align"/></svg></button>
            <button class="tool more" aria-label="More tools">»</button>
        </div>
    </aside>

    <div class="center">
        <div class="viewport">
            <svg class="canvas">
                <defs>
                    <pattern id="grid" x="277" y="499" width="36.900" height="36.900" patternUnits="userSpaceOnUse">
                        <path d="M3.690 0v36.900M7.380 0v36.900M11.070 0v36.900M14.760 0v36.900M18.450 0v36.900M22.140 0v36.900M25.830 0v36.900M29.520 0v36.900M33.210 0v36.900M0 3.690h36.900M0 7.380h36.900M0 11.070h36.900M0 14.760h36.900M0 18.450h36.900M0 22.140h36.900M0 25.830h36.900M0 29.520h36.900M0 33.210h36.900" stroke="#8a919c" stroke-width=".6"/>
                        <path d="M.5 0v36.900M0 .5h36.900" stroke="#747b87"/>
                    </pattern>
                    <linearGradient id="back" x1="0" y1="0" x2="0" y2="1"><stop offset="0" stop-color="#5f5e6f"/><stop offset="1" stop-color="#807e93"/></linearGradient>
                    <linearGradient id="chamfer" x1="0" y1="0" x2="0" y2="1"><stop offset="0" stop-color="#83878f"/><stop offset=".5" stop-color="#767b85"/><stop offset="1" stop-color="#6a6f79"/></linearGradient>
                    <linearGradient id="wood" x1="0" y1="0" x2="0" y2="1"><stop offset="0" stop-color="#833f37"/><stop offset=".3" stop-color="#8f4a40"/><stop offset=".5" stop-color="#854740"/><stop offset=".7" stop-color="#704140"/><stop offset="1" stop-color="#58363a"/></linearGradient>
                    <radialGradient id="shine"><stop offset="0" stop-color="#deb4ae"/><stop offset=".45" stop-color="#c89088" stop-opacity=".85"/><stop offset="1" stop-color="#904a40" stop-opacity="0"/></radialGradient>
                </defs>
                <g transform="translate(-122 -128)">
                    <rect x="122" y="128" width="100%" height="100%" fill="url(#grid)"/>
                    <path d="M277 128v371" stroke="#2f9038" stroke-width="1.500"/>
                    <path d="M277 499h6" stroke="#2f9038"/>
                    <path d="M1021 499.500h1800" stroke="#a03848" stroke-width="1.500"/>

                    <!-- block -->
                    <rect x="283" y="329" width="738" height="184" fill="url(#back)"/>
                    <path d="M362 357h17l10 14v98l-10 15h-17z" fill="url(#chamfer)"/>
                    <path d="M941 357h-17l-10 13v99l10 15h17z" fill="url(#chamfer)"/>
                    <path d="M285 357h77q34 64 0 127h-77z" fill="#d6d7e3" stroke="#eeeef6"/>
                    <path d="M1019 357h-78q-34 64 0 127h78z" fill="#d6d7e3" stroke="#eeeef6"/>

                    <!-- turned baluster -->
                    <path d="M389 373L397 371C403 367 405 361 413 361S423 368 430 371L438 374C442 381 449 386 457 386C463 386 466 382 469 381L475 380C484 374 496 367 515 363C540 358 580 358 602 362C625 366 640 370 655 373C690 380 715 384 747 384C772 384 782 381 791 377L795 373L802 370C807 367 808 361 814 361S821 367 828 370L835 374C840 381 847 383 856 383S867 381 871 379L878 374L884 371C890 368 892 361 898 361S908 366 914 370V471C908 475 904 480 898 480S890 473 884 470L878 467C873 460 865 458 856 458S840 460 835 467L828 471C821 474 820 480 814 480S808 474 802 471L795 467C787 459 771 456 747 456C710 456 685 463 655 469C640 472 625 477 602 479C580 482 540 482 515 477C496 473 484 466 475 461C468 459 466 455 457 455C448 455 443 461 438 467L430 470C424 474 421 480 413 480S402 472 396 468H389Z" fill="url(#wood)"/>
                    <path d="M432 372v97M438 375v92M468 382v76M474 381v78M794 374v92M798 373v96M831 373v96M836 377v89M877 376v90M882 373v96" stroke="#6b3530" stroke-opacity=".5"/>
                    <g fill="url(#shine)">
                        <ellipse cx="565" cy="420" rx="62" ry="13"/>
                        <ellipse cx="490" cy="395" rx="17" ry="10"/>
                        <ellipse cx="722" cy="420" rx="60" ry="8"/>
                        <ellipse cx="406" cy="391" rx="4" ry="15"/>
                        <ellipse cx="420" cy="389" rx="4" ry="15"/>
                        <ellipse cx="413" cy="420" rx="3" ry="15"/>
                        <ellipse cx="434" cy="420" rx="5" ry="15"/>
                        <ellipse cx="447" cy="401" rx="4" ry="8"/>
                        <ellipse cx="464" cy="401" rx="3" ry="8"/>
                        <ellipse cx="457" cy="420" rx="4" ry="9"/>
                        <ellipse cx="471" cy="420" rx="5" ry="14"/>
                        <ellipse cx="787" cy="399" rx="5" ry="10"/>
                        <ellipse cx="796" cy="420" rx="5" ry="15"/>
                        <ellipse cx="809" cy="390" rx="4" ry="15"/>
                        <ellipse cx="820" cy="390" rx="4" ry="15"/>
                        <ellipse cx="814" cy="420" rx="3" ry="15"/>
                        <ellipse cx="833" cy="420" rx="5" ry="15"/>
                        <ellipse cx="843" cy="399" rx="5" ry="9"/>
                        <ellipse cx="868" cy="399" rx="4" ry="9"/>
                        <ellipse cx="856" cy="421" rx="8" ry="8"/>
                        <ellipse cx="880" cy="420" rx="5" ry="15"/>
                        <ellipse cx="893" cy="390" rx="4" ry="15"/>
                        <ellipse cx="903" cy="390" rx="4" ry="15"/>
                        <ellipse cx="898" cy="420" rx="3" ry="15"/>
                    </g>
                    <text x="391" y="366" class="axis light">Y</text>
                    <text x="391" y="419" class="axis light">Z</text>
                    <path d="M389 372h2M391 421v3" stroke="#fff" stroke-width="1.500"/>

                    <rect x="283" y="329" width="738" height="184" fill="none" stroke="#000" stroke-width="2"/>
                    <path d="M284 512.500h736" stroke="#fff"/>
                    <path d="M284 510.500h736" stroke="#222"/>

                    <!-- world axes -->
                    <path d="M157.500 547v28h27" fill="none" stroke="#4c525c"/>
                    <text x="159" y="549" class="axis">y</text>
                    <text x="186" y="577" class="axis">x</text>
                </g>
            </svg>
            <button class="view-name">Top<span></span></button>
        </div>
        <div class="view-tabs">
            <button>Perspective</button><button class="active">Top</button><button>Front</button><button>Right</button><button class="add" aria-label="New viewport"><svg viewBox="0 0 10 10"><path d="M4 1h2v3h3v2H6v3H4V6H1V4h3z" fill="#fff" stroke="#333"/></svg></button>
        </div>
    </div>

    <aside class="panel">
        <div class="panel-tabs">
            <button class="active" aria-label="Properties"><svg><use href="#box"/></svg></button>
            <button aria-label="Display"><svg><use href="#wheel"/></svg></button>
            <button aria-label="Layers"><svg><use href="#layers"/></svg></button>
            <button aria-label="Viewport"><svg><use href="#monitor"/></svg></button>
            <button aria-label="Help"><svg viewBox="0 0 24 24"><path d="M3 3h18v18H3z" fill="#3c58c8" stroke="#142060" stroke-width="2"/><circle cx="12" cy="13" r="7" fill="#fff"/><text x="12" y="18" text-anchor="middle" font-size="14" font-weight="bold" fill="#1c38a8">?</text></svg></button>
            <button class="cog" aria-label="Panel options"><svg><use href="#cog"/></svg></button>
        </div>
        <div class="panel-body">
            <div class="panel-content">
                <p class="count">0 objects selected</p>
                <div class="actions"><button>Apply</button><button>Reset</button></div>

                <section class="group">
                    <h2>Size</h2>
                    <div class="num"><label for="sx">X</label><input id="sx" value="0.00"><div class="spin"><button aria-label="Up"></button><button aria-label="Down"></button></div></div>
                    <div class="num"><label for="sy">Y</label><input id="sy" value="0.00"><div class="spin"><button aria-label="Up"></button><button aria-label="Down"></button></div></div>
                    <div class="num"><label for="sz">Z</label><input id="sz" value="0.00"><div class="spin"><button aria-label="Up"></button><button aria-label="Down"></button></div></div>
                </section>
                <section class="group">
                    <h2>Scale</h2>
                    <div class="num"><label for="cx">X</label><input id="cx" value="1.00"><div class="spin"><button aria-label="Up"></button><button aria-label="Down"></button></div></div>
                    <div class="num"><label for="cy">Y</label><input id="cy" value="1.00"><div class="spin"><button aria-label="Up"></button><button aria-label="Down"></button></div></div>
                    <div class="num"><label for="cz">Z</label><input id="cz" value="1.00"><div class="spin"><button aria-label="Up"></button><button aria-label="Down"></button></div></div>
                </section>
                <section class="group">
                    <h2>Position</h2>
                    <div class="num"><label for="px">X</label><input id="px" value="0.00"><div class="spin"><button aria-label="Up"></button><button aria-label="Down"></button></div></div>
                    <div class="num"><label for="py">Y</label><input id="py" value="0.00"><div class="spin"><button aria-label="Up"></button><button aria-label="Down"></button></div></div>
                    <div class="num"><label for="pz">Z</label><input id="pz" value="0.00"><div class="spin"><button aria-label="Up"></button><button aria-label="Down"></button></div></div>
                </section>
                <section class="group">
                    <h2>Rotation</h2>
                    <div class="num"><label for="rx">X</label><input id="rx" value="0.00"><div class="spin"><button aria-label="Up"></button><button aria-label="Down"></button></div></div>
                    <div class="num"><label for="ry">Y</label><input id="ry" value="0.00"><div class="spin"><button aria-label="Up"></button><button aria-label="Down"></button></div></div>
                    <div class="num"><label for="rz">Z</label><input id="rz" value="0.00"><div class="spin"><button aria-label="Up"></button><button aria-label="Down"></button></div></div>
                </section>
                <section class="group">
                    <h2>Options</h2>
                    <p class="pivot">Pivot location:</p>
                    <div class="radios"><span>X</span><label><input type="radio" name="pivx">Min</label><label><input type="radio" name="pivx" checked>Cen</label></div>
                    <div class="radios"><span>Y</span><label><input type="radio" name="pivy">Min</label><label><input type="radio" name="pivy" checked>Cen</label></div>
                </section>
            </div>
            <div class="vscroll"><i class="up"></i><i class="down"></i></div>
        </div>
        <div class="hscroll"><i class="left"></i><i class="right"></i></div>
    </aside>
</main>

<section class="osnap">
    <label><input type="checkbox" checked>End</label>
    <label><input type="checkbox" checked>Near</label>
    <label><input type="checkbox">Point</label>
    <label><input type="checkbox">Mid</label>
    <label><input type="checkbox">Cen</label>
    <label><input type="checkbox">Int</label>
    <label><input type="checkbox">Perp</label>
    <label><input type="checkbox">Tan</label>
    <label><input type="checkbox">Quad</label>
    <label><input type="checkbox">Knot</label>
    <label><input type="checkbox">Vertex</label>
    <label><input type="checkbox" class="round">Project</label>
    <label><input type="checkbox" class="round">Disable</label>
</section>

<footer class="status">
    <button class="plane">CPlane</button>
    <span class="coord">x -11.99</span>
    <span class="coord">y 100.27</span>
    <span class="coord">z 0.00</span>
    <button class="coord">Millimeters</button>
    <button class="layer"><i></i>Default</button>
    <button>Grid Snap</button>
    <button>Ortho</button>
    <button>Planar</button>
    <button class="on">Osnap</button>
    <button class="on">SmartTrack</button>
    <button class="on">Gumball</button>
    <button class="wide">Record History</button>
    <button>Filter</button>
    <span class="cpu">CPU use: 9.9 %</span>
</footer>

<nav class="taskbar">
    <button class="start" aria-label="Start"><svg viewBox="0 0 36 36"><circle cx="18" cy="18" r="17" fill="url(#gOrb)" stroke="#1c4468"/><path d="M9 11q4-3 8-1l-1 7q-4-2-8 0z" fill="#e8602c"/><path d="M19 11q4 2 8 0l-1 7q-4 2-8 0z" fill="#8cc63c"/><path d="M8 19q4-2 8 0l-1 7q-4-2-8 0z" fill="#44a0e0"/><path d="M18 20q4 2 8 0l-1 7q-4 2-8 0z" fill="#f8cc38"/></svg></button>
    <span class="grip"></span>
    <button class="task open" aria-label="Explorer"><svg viewBox="0 0 32 32"><path d="M2 4h9l2 3h17v22H2z" fill="#f4d878" stroke="#c09828"/><path d="M4 2h6v5H4zM14 4h12v4H14z" fill="#fff4b8"/><path d="M5 2h2v3H5zM16 4h3v2h-3z" fill="#40a048"/><path d="M2 10h28v10H2z" fill="#fbe898"/><path d="M6 18h22v11h-6v-6H12v6H6z" fill="#8cd0f0" stroke="#5ca8d0"/></svg></button>
    <button class="task open" aria-label="P app"><svg viewBox="0 0 32 32"><path d="M1 1h30v30H1z" fill="#fce4d0"/><text x="16" y="26" text-anchor="middle" font-size="28" font-weight="bold" fill="#a86428">P</text></svg></button>
    <button class="task" aria-label="Opera"><svg viewBox="0 0 32 32"><path fill-rule="evenodd" d="M16 2a14 14 0 1 0 0 28 14 14 0 1 0 0-28zM16 6c4 0 6 4 6 10s-2 10-6 10-6-4-6-10 2-10 6-10z" fill="#d81c24"/></svg></button>
    <button class="task" aria-label="Chrome"><svg viewBox="0 0 32 32"><circle cx="16" cy="16" r="14" fill="#3ca850"/><path d="M3 10A14 14 0 0 1 29 10H16l-6 8z" fill="#e03c2c"/><path d="M29 10A14 14 0 0 1 15 30l7-12-3-8z" fill="#fcd030"/><circle cx="16" cy="16" r="7" fill="#fff"/><circle cx="16" cy="16" r="5" fill="#3c78e8"/></svg></button>
    <button class="task open current" aria-label="Rhinoceros"><svg><use href="#rhino"/></svg></button>
    <button class="task open" aria-label="P app"><svg viewBox="0 0 32 32"><path d="M1 1h30v30H1z" fill="#fce4d0"/><text x="16" y="26" text-anchor="middle" font-size="28" font-weight="bold" fill="#a85420">P</text></svg></button>
    <span class="space"></span>
    <span class="grip small"></span>
    <span class="lang">EN</span>
    <div class="tray">
        <svg viewBox="0 0 16 16"><path d="M8 6l4 4H4z" fill="#fff"/></svg>
        <svg viewBox="0 0 16 16"><path d="M3 2v13" stroke="#fff" stroke-width="2"/><path d="M4 2h9v7H4z" fill="#fff"/><path d="M7 7h8v8H7z" fill="#c82020"/><path d="M9 9l4 4M13 9l-4 4" stroke="#fff"/></svg>
        <svg viewBox="0 0 16 16"><path d="M4 3h5v11H4z" fill="#fff"/><path d="M9 6h6v3l-2 2h-2v3M11 6V2M14 6V2" fill="none" stroke="#fff" stroke-width="2"/><circle cx="6" cy="10" r="4" fill="#d02020"/></svg>
        <svg viewBox="0 0 16 16"><path d="M2 6h3l4-4v12L5 10H2z" fill="#fff"/><path d="M11 4q3 4 0 8" fill="none" stroke="#fff" stroke-width="1.500"/></svg>
        <svg viewBox="0 0 16 16"><path d="M1 12h2v2H1zM4 10h2v4H4zM7 8h2v6H7zM10 5h2v9h-2zM13 3h2v11h-2z" fill="#a0a8b8"/><circle cx="11" cy="10" r="4" fill="#d02020"/></svg>
    </div>
    <time class="clock"><span>04:27 ب.ظ</span><span>٢٣/٠١/٢٠٢٣</span></time>
    <button class="desktop" aria-label="Show desktop"></button>
</nav>

<!-- channel mark and pointer ring -->
<div class="mark"><svg viewBox="0 0 28 28"><circle cx="14" cy="14" r="12"/><circle cx="10" cy="10" r="3"/><circle cx="18" cy="10" r="3"/><circle cx="10" cy="18" r="3"/><circle cx="18" cy="18" r="3"/></svg>/AriaMachinery_wood</div>
<svg class="ring" viewBox="0 0 60 60"><circle cx="30" cy="30" r="27" fill="none" stroke="#5fe465" stroke-width="4"/><path d="M30 31v14l3-3 3 6 2-1-3-6h5z" fill="#fff" stroke="#111"/></svg>

</body>
</html>
```
FILE: styles.css
```css
* {
    box-sizing: border-box;
}
body {
    margin: 0;
    height: 100vh;
    display: flex;
    flex-direction: column;
    overflow: hidden;
    position: relative;
    background: #dfe1ea;
    color: #111;
    font-family: "Liberation Sans", Arial, sans-serif;
    font-size: 12px;
}
button, input {
    font: inherit;
    color: inherit;
    margin: 0;
    padding: 0;
    border: none;
    background: none;
}
a {
    color: inherit;
    text-decoration: none;
}
svg {
    display: block;
}
.defs {
    position: absolute;
    width: 0;
    height: 0;
}

/* Title bar */
.titlebar {
    display: flex;
    align-items: center;
    height: 20px;
    background: linear-gradient(to right, #7d96b4 0, #8fa3bb 220px, #5579a4 250px, #1e4f8e 290px, #1b5291 50%, #2a5f98 65%, #143f78 80%, #23517f 100%);
    border-bottom: 1px solid #3c4c60;
    font-family: "Open Sans", sans-serif;
    font-size: 11px;
    font-weight: 500;
    color: #000;
}
.app-icon {
    width: 15px;
    height: 15px;
}
.title {
    margin-left: 5px;
    flex: 1;
}
.win-buttons {
    display: flex;
    align-self: flex-start;
    margin-right: 4px;
    border: 1px solid #d0dce8;
    border-top: none;
    border-radius: 0 0 5px 5px;
    overflow: hidden;
}
.win-buttons button {
    width: 26px;
    height: 15px;
    display: flex;
    align-items: center;
    justify-content: center;
    background: linear-gradient(#a8b4c4, #4c5c74);
    border-right: 1px solid #c8d4e0;
}
.win-buttons .close {
    width: 43px;
    border: none;
    background: linear-gradient(#e09484, #b8321c);
}
.win-buttons svg {
    width: 11px;
    height: 11px;
}

/* Menu */
.menubar {
    display: flex;
    align-items: center;
    gap: 12px;
    height: 20px;
    padding-left: 7px;
    background: linear-gradient(#fbfcfe, #e6e9f5 40%, #d5daee);
    border-bottom: 1px solid #c0c6d6;
    font-family: "Open Sans", sans-serif;
    font-size: 11px;
    font-weight: 500;
    color: #000;
}

/* Command line */
.command {
    height: 34px;
    padding: 2px 2px 3px 5px;
    border-bottom: 1px solid #b8bcc8;
}
.history {
    height: 11px;
    margin-right: 12px;
    background: #fff;
    border-bottom: 2px solid #b4b4b8;
    border-left: 1px solid #aaa;
}
.prompt {
    display: flex;
    align-items: center;
    height: 18px;
    padding: 0 0 2px 2px;
    background: #fff;
    font-weight: bold;
}
.prompt input {
    flex: 1;
    height: 16px;
    outline: none;
}

/* Up and down buttons */
.spin {
    display: flex;
    flex-direction: column;
    width: 13px;
    height: 16px;
}
.spin button {
    flex: 1;
    display: flex;
    align-items: center;
    justify-content: center;
    border: 1px solid #b4b4ba;
    background: #f2f2f4;
}
.spin button::before {
    content: "";
    border: 2px solid transparent;
    border-top: none;
    border-bottom: 3px solid #555;
}
.spin button + button::before {
    border-top: 3px solid #555;
    border-bottom: none;
}

/* Standard toolbar */
.toolbar {
    height: 54px;
    display: flex;
    flex-direction: column;
    border-bottom: 1px solid #8c92a0;
    background: linear-gradient(#dfe1ea 17px, #f6f7fa 18px, #dfe1ea);
}
.tool-tabs {
    display: flex;
    height: 18px;
    padding: 4px 2px 0 9px;
    border-bottom: 1px solid #8a8e9a;
    font-size: 11px;
}
.tool-tabs button {
    position: relative;
    z-index: 0;
    padding: 0 7px 0 6px;
}
.tool-tabs button:not(.cog)::before {
    content: "";
    position: absolute;
    inset: 0;
    z-index: -1;
    background: #d5dbea;
    border: 1px solid #a4aaba;
    border-bottom: none;
    border-radius: 3px 4px 0 0;
    transform: skewX(-20deg);
}
.tool-tabs .active::before {
    background: #fafbfd;
}
.tool-tabs .cog {
    margin-left: auto;
    padding: 0;
}
.cog svg {
    width: 13px;
    height: 13px;
}
.tools {
    display: grid;
    grid-template-columns: repeat(32, 1fr);
    width: 840px;
    margin: 2px 0 0 6px;
}
.tool {
    position: relative;
    display: flex;
    align-items: center;
    justify-content: center;
}
.tool svg {
    width: 24px;
    height: 24px;
}
.fly::after {
    content: "";
    position: absolute;
    right: 1px;
    bottom: 1px;
    width: 5px;
    height: 5px;
    background: #333;
    clip-path: polygon(100% 0, 100% 100%, 0 100%);
}

/* Work area */
.main {
    flex: 1;
    min-height: 0;
    display: flex;
}
.palettes {
    display: flex;
    width: 122px;
    padding: 4px 1px 4px 0;
}
.palette {
    width: 32px;
    display: grid;
    grid-template-rows: repeat(18, 1fr);
    padding: 3px 4px 20px 1px;
    background: linear-gradient(#b8bcc8, #b8bcc8) 50% 0 / 26px 3px no-repeat;
    border-left: 1px solid #c4c8d2;
}
.palette.two {
    width: 57px;
    grid-template-columns: 1fr 1fr;
    background-size: 52px 3px;
    border-left: none;
}
.more {
    font-size: 18px;
    font-weight: bold;
}
.center {
    flex: 1;
    min-width: 0;
    display: flex;
    flex-direction: column;
}
.viewport {
    flex: 1;
    min-height: 0;
    position: relative;
    background: #9ba1ac;
    border-right: 1px solid #7c828e;
}
.canvas {
    position: absolute;
    width: 100%;
    height: 100%;
}
.axis {
    font-size: 12px;
    fill: #3c424c;
}
.light {
    font-size: 10px;
    font-weight: bold;
    fill: #fff;
}
.view-name {
    position: absolute;
    left: 0;
    top: 0;
    display: flex;
    align-items: center;
    height: 18px;
    padding-left: 8px;
    background: #7f9fc4;
    color: #16283c;
    font-family: Roboto, sans-serif;
}
.view-name span {
    width: 10px;
    height: 14px;
    margin-left: 6px;
    background: #16283c;
    clip-path: polygon(0 0, 10% 0, 10% 35%, 100% 35%, 55% 75%, 10% 45%, 10% 100%, 0 100%);
}

/* Viewport tabs */
.view-tabs {
    display: flex;
    height: 23px;
    padding: 1px 0 3px 2px;
    font-family: Roboto, sans-serif;
}
.view-tabs button {
    position: relative;
    z-index: 0;
    padding: 0 7px;
}
.view-tabs button:first-child {
    padding: 0 5px 0 8px;
}
.view-tabs button::before {
    content: "";
    position: absolute;
    inset: 0;
    z-index: -1;
    background: #d5dbee;
    border: 1px solid #a4aaba;
    border-top: none;
    border-radius: 0 0 4px 6px;
    transform: skewX(20deg);
}
.view-tabs .active::before {
    background: #fff;
}
.view-tabs svg {
    width: 10px;
    height: 10px;
}

/* Properties panel */
.panel {
    width: 137px;
    margin: 4px 0 5px 7px;
    display: flex;
    flex-direction: column;
    border: 1px solid #8c92a0;
    border-right: none;
    font-size: 11px;
    color: #444;
}
.panel-tabs {
    display: flex;
    height: 22px;
    padding: 3px 2px 0 0;
    border-bottom: 1px solid #8c92a0;
}
.panel-tabs button {
    width: 17px;
    display: flex;
    align-items: center;
    justify-content: center;
    border-right: 1px solid #b0b4c0;
}
.panel-tabs .active {
    background: #f6f7fb;
}
.panel-tabs svg {
    width: 16px;
    height: 16px;
    flex: none;
}
.panel-tabs .cog {
    width: 13px;
    margin-left: auto;
    border: none;
}
.panel-tabs .cog svg {
    width: 13px;
    height: 13px;
}
.panel-body {
    flex: 1;
    min-height: 0;
    display: flex;
    background: #f6f7fb;
}
.panel-content {
    flex: 1;
    min-width: 0;
    overflow: hidden;
    padding: 8px 0 0 10px;
}
.count {
    margin: 0;
    line-height: 18px;
}
.actions {
    display: flex;
    gap: 4px;
    margin: 6px 0 4px;
}
.actions button {
    flex: none;
    width: 68px;
    height: 21px;
    border: 1px solid #9a9aa2;
    border-radius: 2px;
}
.group {
    padding-bottom: 5px;
}
.group h2 {
    display: flex;
    align-items: center;
    gap: 4px;
    height: 18px;
    margin: 0;
    padding-right: 20px;
    font-size: 11px;
    font-weight: normal;
}
.group h2::before {
    content: "";
    width: 9px;
    height: 9px;
    border: 1px solid #777;
    background: linear-gradient(#444, #444) 50% 50% / 5px 1px no-repeat;
}
.group h2::after {
    content: "";
    flex: 1;
    height: 1px;
    background: #8c8c94;
}
.num {
    display: flex;
    align-items: center;
    height: 20px;
    padding-right: 1px;
}
.num label, .radios span {
    width: 25px;
    padding-left: 7px;
    color: #888;
    flex: none;
}
.num input {
    flex: 1;
    min-width: 0;
    height: 20px;
    padding-left: 2px;
    border: 1px solid #a4a4ac;
    border-right: none;
}
.num .spin {
    width: 14px;
    height: 20px;
    padding: 1px 0;
    border: 1px solid #a4a4ac;
    border-left: none;
}
.pivot {
    margin: 0;
    padding-left: 9px;
    line-height: 16px;
    color: #777;
}
.radios {
    display: flex;
    align-items: center;
    height: 19px;
}
.radios label {
    display: flex;
    align-items: center;
    gap: 5px;
    width: 42px;
    flex: none;
}
.radios input {
    appearance: none;
    flex: none;
    width: 11px;
    height: 11px;
    border: 1px solid #999;
    border-radius: 50%;
}
.radios input:checked {
    background: radial-gradient(#777 2px, transparent 4px);
}
.vscroll, .hscroll {
    display: flex;
    justify-content: space-between;
    align-items: center;
    background: #efeff2;
}
.vscroll {
    flex-direction: column;
    width: 16px;
    padding: 6px 0;
}
.hscroll {
    height: 15px;
    padding: 0 20px 0 4px;
}
.vscroll i, .hscroll i {
    width: 7px;
    height: 4px;
    background: #555;
}
.hscroll i {
    width: 4px;
    height: 7px;
}
.up {
    clip-path: polygon(50% 0, 100% 100%, 0 100%);
}
.down {
    clip-path: polygon(0 0, 100% 0, 50% 100%);
}
.left {
    clip-path: polygon(0 50%, 100% 0, 100% 100%);
}
.right {
    clip-path: polygon(0 0, 100% 50%, 0 100%);
}

/* Object snaps */
.osnap {
    display: flex;
    align-items: center;
    gap: 6px;
    height: 32px;
    padding: 0 0 6px 10px;
    font-family: Roboto, sans-serif;
    font-size: 11px;
}
.osnap label {
    display: flex;
    align-items: center;
    gap: 4px;
}
.osnap input {
    appearance: none;
    width: 12px;
    height: 12px;
    border: 1px solid #80848e;
    background: linear-gradient(135deg, #d8dae0, #fff);
}
.osnap .round {
    width: 14px;
    height: 14px;
    border: 1px solid #666;
    border-radius: 3px;
}
.osnap input:checked::after {
    content: "";
    display: block;
    width: 4px;
    height: 8px;
    margin: 0 0 0 3px;
    border: solid #26305c;
    border-width: 0 2px 2px 0;
    transform: rotate(40deg);
}

/* Status bar */
.status {
    display: flex;
    height: 19px;
    border-top: 1px solid #9a9ea8;
    background: #e6e7ee;
}
.status > * {
    display: flex;
    align-items: center;
    padding: 0 8px;
    border-right: 1px solid #a8acb6;
    white-space: nowrap;
}
.status .plane {
    width: 52px;
    padding: 0 6px;
}
.status .coord {
    width: 83px;
    justify-content: center;
}
.status .layer {
    width: 160px;
    padding: 0 2px;
    gap: 2px;
}
.layer i {
    width: 13px;
    height: 13px;
    background: #000;
}
.status .on {
    background: #f4faff;
    font-weight: bold;
    padding: 0 6px;
}
.status .wide {
    padding: 0 12px;
}
.status .cpu {
    flex: 1;
    margin-right: 6px;
    padding: 0 3px;
}

/* Taskbar */
.taskbar {
    display: flex;
    align-items: center;
    height: 37px;
    background: linear-gradient(to right, #2f6f9e 0, #4a94c0 60px, #4b9fd2 160px, #3f98d0 440px, #2a83c4 640px, #1f6bb8 840px, #17509a 980px, #123a72 1060px, #163f70 100%);
    border-top: 1px solid #8cb8d8;
}
.start {
    width: 36px;
    height: 36px;
    margin-left: 7px;
}
.grip {
    width: 8px;
    height: 30px;
    margin: 0 9px 0 11px;
    background: radial-gradient(#1c4468 1px, transparent 1px) 0 0 / 3px 3px;
}
.task {
    width: 54px;
    height: 36px;
    margin-right: 4px;
    display: flex;
    align-items: center;
    justify-content: center;
    border-radius: 3px;
}
.task.open {
    border: 1px solid #2c6088;
    background: linear-gradient(#a8d0e8, #6cb0d8);
    box-shadow: inset 0 0 0 1px #c4e4f4;
}
.task.current {
    background: linear-gradient(#f0f8fc, #c8e4f4);
}
.task svg {
    width: 31px;
    height: 31px;
}
.space {
    flex: 1;
}
.grip.small {
    margin: 0 9px 0 0;
}
.lang {
    color: #fff;
    font-family: "Open Sans", sans-serif;
    width: 24px;
    margin-bottom: 6px;
}
.tray {
    display: flex;
    gap: 7px;
    margin-right: 16px;
}
.tray svg {
    width: 16px;
    height: 16px;
}
.clock {
    display: flex;
    flex-direction: column;
    align-items: center;
    width: 60px;
    color: #fff;
    font-family: "Open Sans", "DejaVu Sans", sans-serif;
    font-size: 11px;
    line-height: 16px;
    white-space: nowrap;
}
.desktop {
    width: 12px;
    height: 34px;
    margin-left: 8px;
    border: 1px solid #7c98b8;
    background: linear-gradient(#5c7ca0, #1c4474);
}

/* Overlays */
.mark {
    position: absolute;
    left: 8px;
    bottom: 39px;
    display: flex;
    align-items: center;
    gap: 6px;
    font-size: 26px;
    line-height: 30px;
    color: rgba(255, 255, 255, 0.5);
    -webkit-text-stroke: 1px rgba(150, 150, 158, 0.5);
    pointer-events: none;
}
.mark svg {
    width: 30px;
    height: 30px;
    fill: rgba(255, 255, 255, 0.5);
    stroke: rgba(130, 130, 138, 0.7);
}
.ring {
    position: absolute;
    left: 109px;
    top: 30px;
    width: 60px;
    height: 60px;
    pointer-events: none;
}
```
